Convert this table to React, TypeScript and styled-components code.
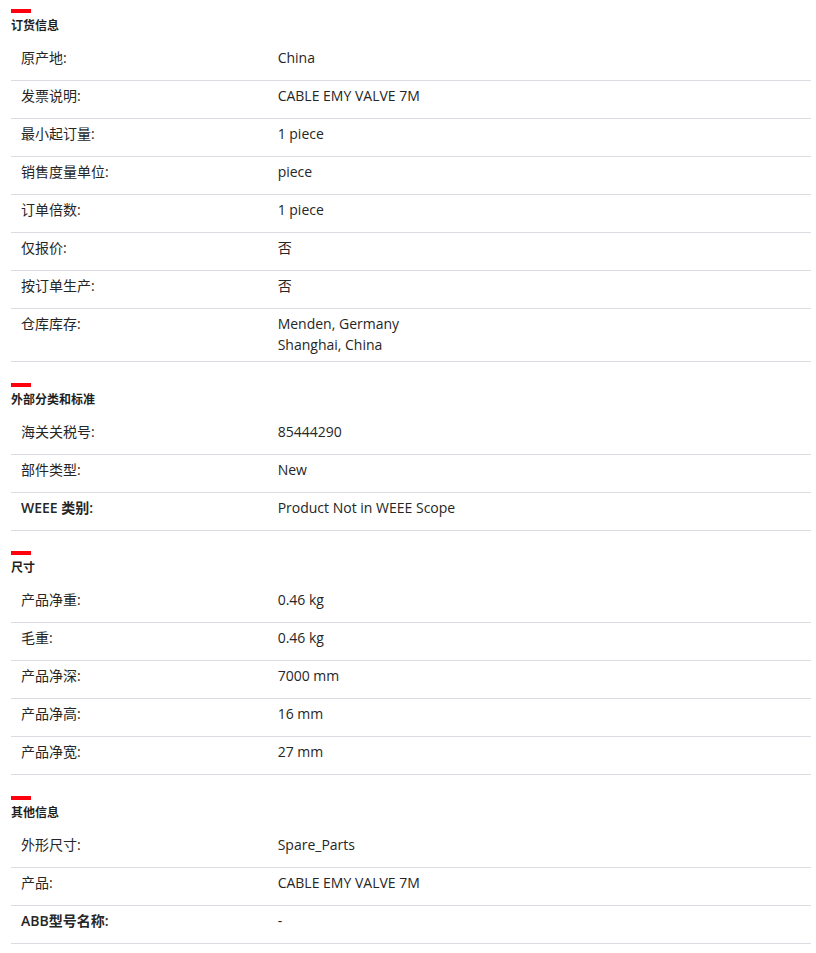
import React from 'react';
import styled, { createGlobalStyle } from 'styled-components';

const GlobalStyle = createGlobalStyle`
  html, body {
    margin: 0;
    padding: 0;
    background: #ffffff;
  }
  body {
    font-family: "Open Sans", "Noto Sans CJK SC", sans-serif;
    color: #262626;
  }
`;

const Page = styled.div`
  width: 800px;
  padding: 9px 0 0 11px;
`;

const Section = styled.section`
  margin-bottom: 20.67px;
`;

const SectionBar = styled.div`
  width: 20px;
  height: 4px;
  background: #ff000f;
`;

const SectionTitle = styled.h3`
  margin: 4px 0 8px;
  font-size: 12px;
  line-height: 18px;
  font-weight: 700;
  color: #1f1f1f;
`;

const Row = styled.div`
  display: grid;
  grid-template-columns: 1fr 2fr;
  box-sizing: border-box;
  min-height: 38px;
  padding: 4px 0 6px;
  border-bottom: 1px solid #dcdde2;
  font-size: 14px;
  line-height: 21px;
`;

const Label = styled.div<{ $strong?: boolean }>`
  padding-left: 10px;
  font-weight: ${({ $strong }) => ($strong ? 600 : 400)};
  color: #262626;
`;

const Value = styled.div`
  color: #262626;
`;

const ValueLine = styled.div``;

interface Item {
  label: string;
  value: string[];
  strong?: boolean;
}

interface Group {
  title: string;
  items: Item[];
}

const groups: Group[] = [
  {
    title: '订货信息',
    items: [
      { label: '原产地:', value: ['China'] },
      { label: '发票说明:', value: ['CABLE EMY VALVE 7M'] },
      { label: '最小起订量:', value: ['1 piece'] },
      { label: '销售度量单位:', value: ['piece'] },
      { label: '订单倍数:', value: ['1 piece'] },
      { label: '仅报价:', value: ['否'] },
      { label: '按订单生产:', value: ['否'] },
      { label: '仓库库存:', value: ['Menden, Germany', 'Shanghai, China'] },
    ],
  },
  {
    title: '外部分类和标准',
    items: [
      { label: '海关关税号:', value: ['85444290'] },
      { label: '部件类型:', value: ['New'] },
      { label: 'WEEE 类别:', value: ['Product Not in WEEE Scope'], strong: true },
    ],
  },
  {
    title: '尺寸',
    items: [
      { label: '产品净重:', value: ['0.46 kg'] },
      { label: '毛重:', value: ['0.46 kg'] },
      { label: '产品净深:', value: ['7000 mm'] },
      { label: '产品净高:', value: ['16 mm'] },
      { label: '产品净宽:', value: ['27 mm'] },
    ],
  },
  {
    title: '其他信息',
    items: [
      { label: '外形尺寸:', value: ['Spare_Parts'] },
      { label: '产品:', value: ['CABLE EMY VALVE 7M'] },
      { label: 'ABB型号名称:', value: ['-'], strong: true },
    ],
  },
];

export default function App() {
  return (
    <>
      <GlobalStyle />
      <Page>
        {groups.map((group) => (
          <Section key={group.title}>
            <SectionBar />
            <SectionTitle>{group.title}</SectionTitle>
            {group.items.map((item) => (
              <Row key={item.label}>
                <Label $strong={item.strong}>{item.label}</Label>
                <Value>
                  {item.value.map((line) => (
                    <ValueLine key={line}>{line}</ValueLine>
                  ))}
                </Value>
              </Row>
            ))}
          </Section>
        ))}
      </Page>
    </>
  );
}
